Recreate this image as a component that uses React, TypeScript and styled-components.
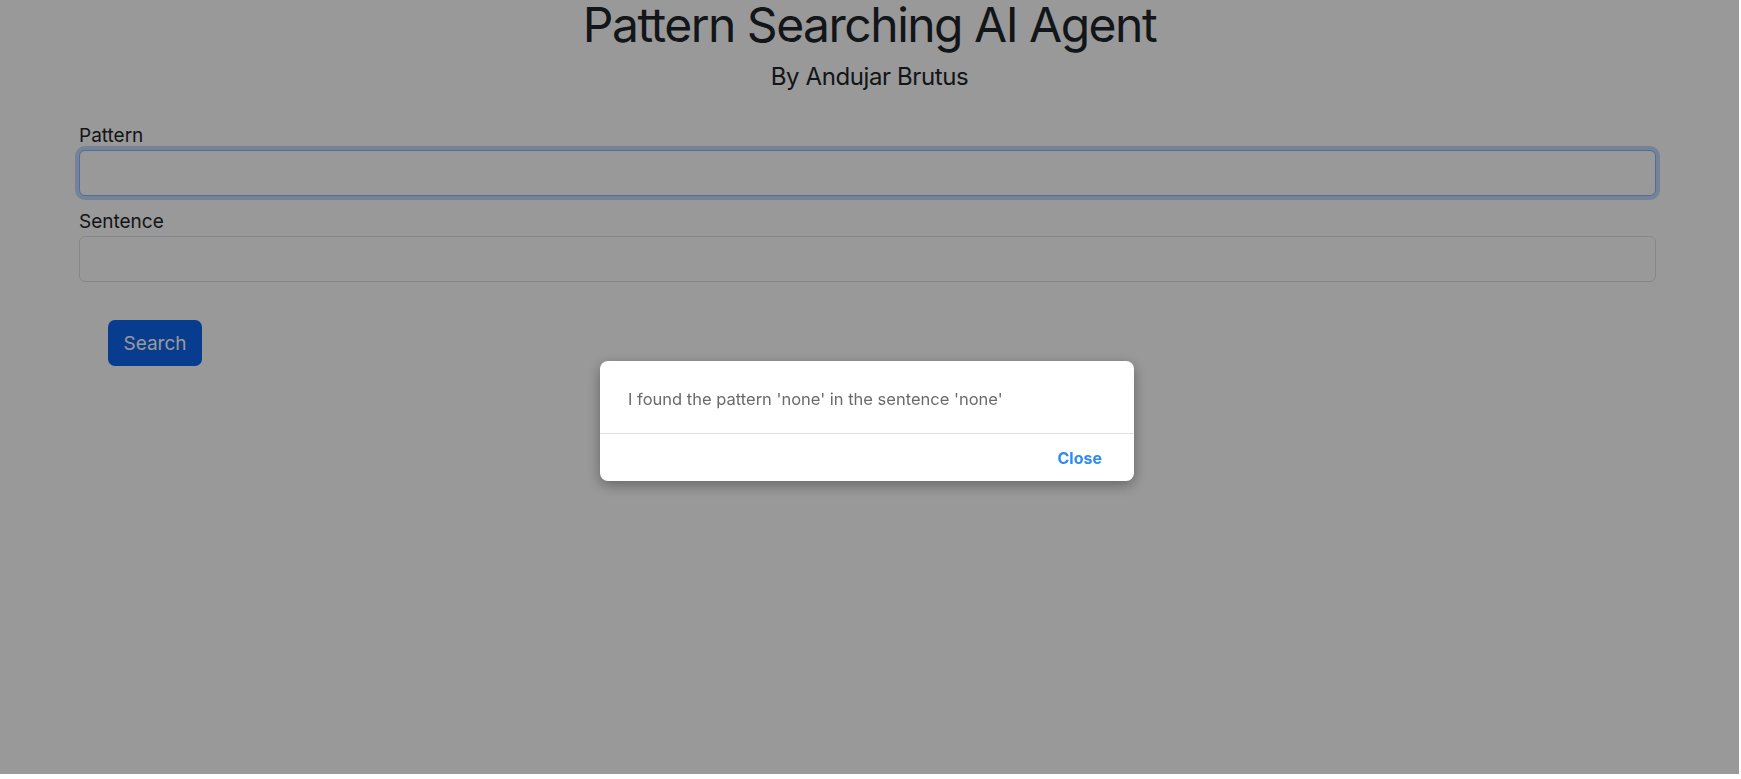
import React from "react";
import styled, { createGlobalStyle } from "styled-components";

const GlobalStyle = createGlobalStyle`
  html, body {
    margin: 0;
    padding: 0;
    background: #ffffff;
  }
  body {
    font-family: Inter, "Noto Sans", "Liberation Sans", sans-serif;
    color: #212529;
  }
  * { box-sizing: border-box; }
`;

const Page = styled.div`
  display: flex;
  flex-direction: column;
  width: 1739px;
  padding-top: 1px;
`;

const Header = styled.header`
  display: flex;
  flex-direction: column;
  align-items: center;
`;

const Title = styled.h1`
  margin: 0;
  font-size: 48px;
  line-height: 48px;
  font-weight: 430;
  letter-spacing: -1.5px;
  color: #212529;
`;

const Subtitle = styled.h2`
  margin: 16px 0 0;
  font-size: 24px;
  line-height: 24px;
  font-weight: 400;
  letter-spacing: -0.4px;
  color: #212529;
`;

const Form = styled.form`
  display: flex;
  flex-direction: column;
  margin: 35px 0 0 79px;
  width: 1577px;
`;

const Field = styled.div<{ $gap?: number }>`
  display: flex;
  flex-direction: column;
  gap: 3px;
  margin-top: ${(p) => p.$gap ?? 0}px;
`;

const Label = styled.label`
  font-size: 19px;
  line-height: 23px;
  color: #212529;
`;

const Input = styled.input<{ $focused?: boolean }>`
  height: 46px;
  width: 100%;
  border-radius: 6px;
  border: 1px solid ${(p) => (p.$focused ? "#86b7fe" : "#dee2e6")};
  box-shadow: ${(p) => (p.$focused ? "0 0 0 4px rgba(13, 110, 253, 0.25)" : "none")};
  background: #ffffff;
  font-size: 19px;
  padding: 0 14px;
  outline: none;
  font-family: inherit;
`;

const ButtonRow = styled.div`
  display: flex;
  margin: 38px 0 0 29px;
`;

const SearchButton = styled.button`
  width: 94px;
  height: 46px;
  border: none;
  border-radius: 7px;
  background: #0d64ed;
  color: #ffffff;
  font-family: inherit;
  font-size: 19px;
  font-weight: 400;
  cursor: pointer;
`;

const Backdrop = styled.div`
  position: fixed;
  top: 0;
  left: 0;
  width: 1739px;
  height: 774px;
  background: rgba(0, 0, 0, 0.4);
  display: flex;
  justify-content: center;
  align-items: flex-start;
  padding: 361px 5px 0 0;
`;

const Dialog = styled.div`
  width: 534px;
  background: #ffffff;
  border-radius: 8px;
  box-shadow: 0 4px 14px rgba(0, 0, 0, 0.35);
  display: flex;
  flex-direction: column;
  overflow: hidden;
`;

const DialogBody = styled.div`
  padding: 28px 28px 24px;
`;

const Message = styled.p`
  margin: 0;
  font-size: 16.5px;
  line-height: 20px;
  color: #6a6a6a;
`;

const DialogFooter = styled.div`
  border-top: 1px solid #e2e2e2;
  display: flex;
  justify-content: flex-end;
  padding: 14px 32px 13px;
`;

const CloseButton = styled.button`
  border: none;
  background: none;
  padding: 0;
  font-family: inherit;
  font-size: 16px;
  line-height: 20px;
  font-weight: 700;
  color: #2d8cf0;
  cursor: pointer;
`;

export default function App() {
  return (
    <>
      <GlobalStyle />
      <Page>
        <Header>
          <Title>Pattern Searching AI Agent</Title>
          <Subtitle>By Andujar Brutus</Subtitle>
        </Header>
        <Form onSubmit={(e) => e.preventDefault()}>
          <Field>
            <Label htmlFor="pattern">Pattern</Label>
            <Input id="pattern" $focused />
          </Field>
          <Field $gap={14}>
            <Label htmlFor="sentence">Sentence</Label>
            <Input id="sentence" />
          </Field>
          <ButtonRow>
            <SearchButton type="submit">Search</SearchButton>
          </ButtonRow>
        </Form>
      </Page>
      <Backdrop>
        <Dialog role="dialog">
          <DialogBody>
            <Message>I found the pattern 'none' in the sentence 'none'</Message>
          </DialogBody>
          <DialogFooter>
            <CloseButton type="button">Close</CloseButton>
          </DialogFooter>
        </Dialog>
      </Backdrop>
    </>
  );
}
